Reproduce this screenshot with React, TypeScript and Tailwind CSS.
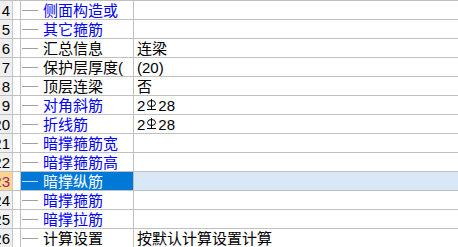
import React from 'react';

// 属性表（行 4 - 26）
type Row = {
  no: number;
  name: string;
  value?: string;
  blue?: boolean;
  selected?: boolean;
};

const rows: Row[] = [
  { no: 4, name: '侧面构造或', blue: true },
  { no: 5, name: '其它箍筋', blue: true },
  { no: 6, name: '汇总信息', value: '连梁' },
  { no: 7, name: '保护层厚度(', value: '(20)' },
  { no: 8, name: '顶层连梁', value: '否' },
  { no: 9, name: '对角斜筋', value: '2#28', blue: true },
  { no: 20, name: '折线筋', value: '2#28', blue: true },
  { no: 21, name: '暗撑箍筋宽', blue: true },
  { no: 22, name: '暗撑箍筋高', blue: true },
  { no: 23, name: '暗撑纵筋', selected: true },
  { no: 24, name: '暗撑箍筋', blue: true },
  { no: 25, name: '暗撑拉筋', blue: true },
  { no: 26, name: '计算设置', value: '按默认计算设置计算' },
];

// 三级钢符号
const RebarIII: React.FC = () => (
  <svg width="11" height="14" viewBox="0 0 11 14" className="inline-block mx-[1px]">
    <line x1="5.5" y1="1" x2="5.5" y2="11" stroke="#000" strokeWidth="1" />
    <ellipse cx="5.5" cy="5.5" rx="4" ry="3" fill="none" stroke="#000" strokeWidth="1" />
    <line x1="1" y1="11.5" x2="10" y2="11.5" stroke="#000" strokeWidth="1" />
  </svg>
);

const Value: React.FC<{ text?: string }> = ({ text }) => {
  if (!text) return null;
  if (text.includes('#')) {
    const [a, b] = text.split('#');
    return (
      <span className="flex items-center">
        {a}
        <RebarIII />
        {b}
      </span>
    );
  }
  return <span>{text}</span>;
};

export default function App() {
  return (
    <div
      className="w-[458px] h-[247px] overflow-hidden bg-white text-[15px] leading-none text-black"
      style={{ fontFamily: '"Liberation Sans", "Noto Sans CJK SC", sans-serif' }}
    >
      {rows.map((r) => (
        <div key={r.no} className="flex h-[19px] border-t border-[#c0c0c0]">
          {/* 行号 */}
          <div
            className={`w-[13px] shrink-0 overflow-hidden border-r border-[#c8c8c8] flex items-center justify-end pr-[2px] whitespace-nowrap ${
              r.selected ? 'bg-[#fcd58e] text-[#9b2a6e]' : 'bg-[#f0f0f0] text-black'
            }`}
          >
            {r.no}
          </div>
          <div className="w-[8px] shrink-0 border-r border-[#c0c0c0] bg-white" />
          {/* 名称 */}
          <div
            className={`w-[113px] shrink-0 border-r border-[#c0c0c0] flex items-center whitespace-nowrap overflow-hidden ${
              r.selected ? 'bg-[#0078d7] text-white' : r.blue ? 'text-[#0000ff]' : 'text-black'
            }`}
          >
            <div
              className={`ml-[1px] w-[16px] h-[1px] shrink-0 ${r.selected ? 'bg-[#c8dcf0]' : 'bg-[#a0a0a0]'}`}
            />
            <span className="ml-[5px]">{r.name}</span>
          </div>
          {/* 值 */}
          <div
            className={`flex-1 flex items-center pl-[3px] whitespace-nowrap ${
              r.selected ? 'bg-[#d9e8f7]' : 'bg-white'
            }`}
          >
            <Value text={r.value} />
          </div>
        </div>
      ))}
    </div>
  );
}
